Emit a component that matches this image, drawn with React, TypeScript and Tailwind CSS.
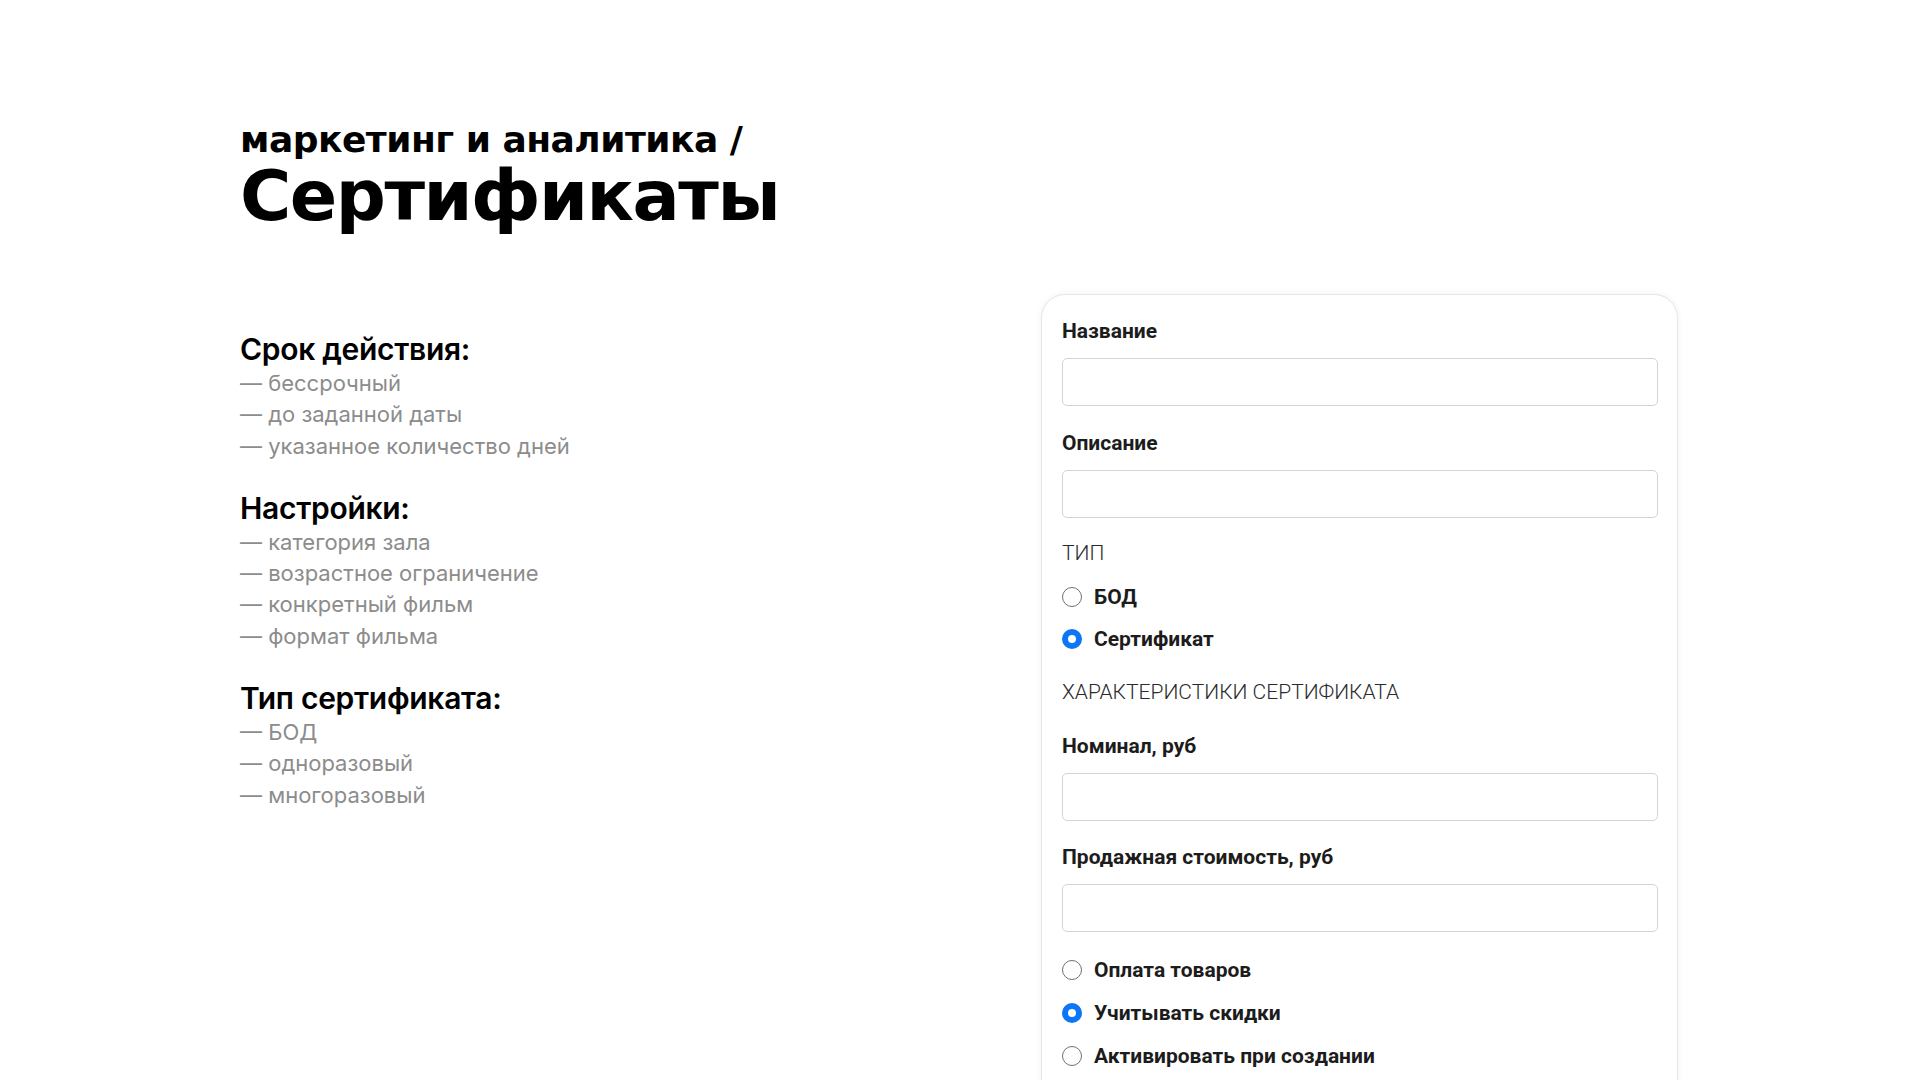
import React from "react";

const sections = [
  { title: "Срок действия:", items: ["бессрочный", "до заданной даты", "указанное количество дней"] },
  { title: "Настройки:", items: ["категория зала", "возрастное ограничение", "конкретный фильм", "формат фильма"] },
  { title: "Тип сертификата:", items: ["БОД", "одноразовый", "многоразовый"] },
];

function Radio({ checked, label, className = "" }: { checked?: boolean; label: string; className?: string }) {
  return (
    <label className={`flex h-6 items-center gap-3 ${className}`}>
      {checked ? (
        <span className="h-5 w-5 rounded-full border-[6px] border-[#0b76f6] bg-white" />
      ) : (
        <span className="h-5 w-5 rounded-full border-[1.5px] border-[#707070] bg-white" />
      )}
      <span className="text-[21px] font-bold leading-6 text-[#1c1c1c]">{label}</span>
    </label>
  );
}

function Field({ label, className = "" }: { label: string; className?: string }) {
  return (
    <div className={className}>
      <div className="text-[21px] font-bold leading-6 text-[#1c1c1c]">{label}</div>
      <div className="mt-[15px] h-12 rounded-[5px] border border-[#d4d4d4] bg-white" />
    </div>
  );
}

export default function App() {
  return (
    <main className="min-h-screen overflow-hidden bg-white pl-[240px] pt-[120px]" style={{ height: 1080 }}>
      <div className="font-['DejaVu_Sans',sans-serif] text-black">
        <div className="text-[36px] font-bold leading-[40px] tracking-[-0.5px]">маркетинг и аналитика /</div>
        <h1 className="text-[70px] font-bold leading-[72px] tracking-[-1.5px]">Сертификаты</h1>
      </div>

      <div className="mt-[62px] flex">
        <div className="w-[801px] pt-[37px] font-['Inter',sans-serif]">
          {sections.map((s, i) => (
            <section key={s.title} className={i > 0 ? "mt-7" : ""}>
              <h2 className="mb-px text-[30px] font-semibold leading-9 tracking-[-0.3px] text-black">{s.title}</h2>
              <ul>
                {s.items.map((it) => (
                  <li key={it} className="text-[22px] leading-[31.3px] text-[#8c8c8c]">
                    — {it}
                  </li>
                ))}
              </ul>
            </section>
          ))}
        </div>

        <div className="h-[900px] w-[637px] rounded-[24px] border border-[#e6e6e6] bg-white pl-[20px] pr-[19px] pt-[24px] font-['Roboto',sans-serif] shadow-[0_0_6px_rgba(0,0,0,0.06)]">
          <Field label="Название" />
          <Field label="Описание" className="mt-[25px]" />

          <div className="mt-[23px] text-[21px] font-light leading-6 text-[#2a2a2a]">ТИП</div>
          <Radio label="БОД" className="mt-[20px]" />
          <Radio label="Сертификат" checked className="mt-[18px]" />

          <div className="mt-[29px] text-[21px] font-light leading-6 text-[#2a2a2a]">ХАРАКТЕРИСТИКИ СЕРТИФИКАТА</div>
          <Field label="Номинал, руб" className="mt-[30px]" />
          <Field label="Продажная стоимость, руб" className="mt-[24px]" />

          <Radio label="Оплата товаров" className="mt-[26px]" />
          <Radio label="Учитывать скидки" checked className="mt-[19px]" />
          <Radio label="Активировать при создании" className="mt-[19px]" />
        </div>
      </div>
    </main>
  );
}
